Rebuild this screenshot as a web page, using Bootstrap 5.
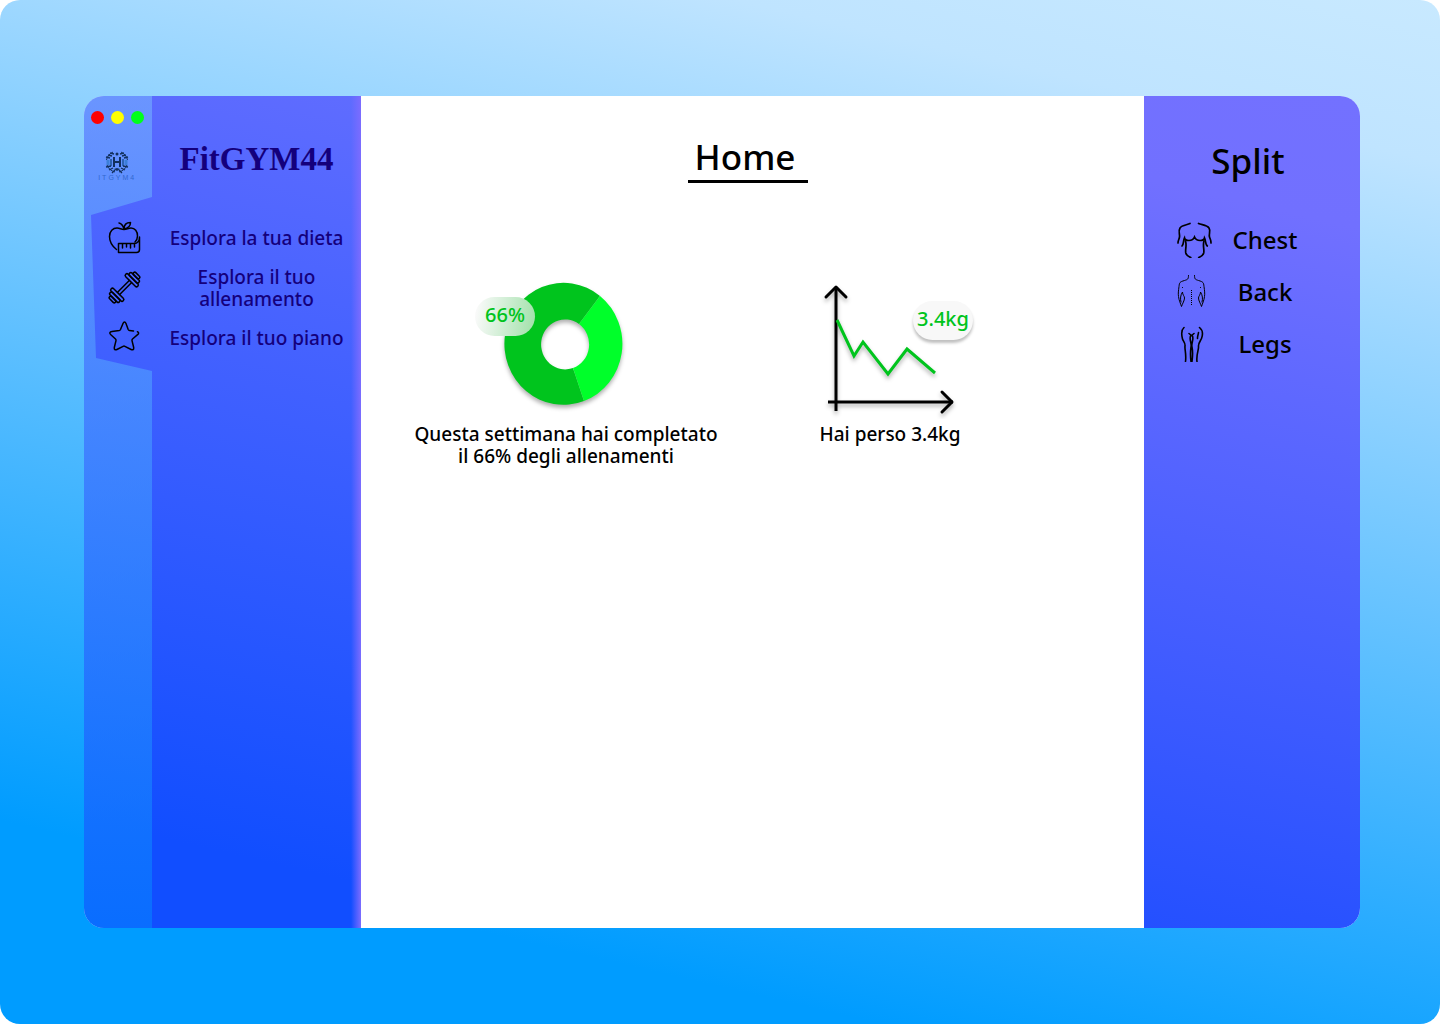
<!DOCTYPE html>
<html lang="it">
<head>
<meta charset="utf-8">
<meta name="viewport" content="width=device-width, initial-scale=1">
<title>FitGYM44</title>
<link href="https://cdn.jsdelivr.net/npm/bootstrap@5.3.0/dist/css/bootstrap.min.css" rel="stylesheet">
<style>
  body { background: #fff; font-family: "Noto Sans", "Open Sans", sans-serif; font-weight: 500; color: #000; }
  a { color: inherit; text-decoration: none; }
  .desktop { padding: 96px 80px 96px 84px; border-radius: 20px; background: linear-gradient(193deg, #c8e9ff 0%, #bfe4ff 12%, #009cff 85%); }
  .app-window { border-radius: 20px; overflow: hidden; background: #fff; }

  .sidebar { flex: 0 0 277px; background: linear-gradient(90deg, transparent 267px, #7c6cff 277px), linear-gradient(193deg, #5f6cff 0%, #114eff 88%); isolation: isolate; }
  .sidebar::before { content: ""; position: absolute; inset: 0 auto 0 0; width: 68px; z-index: -1; background: linear-gradient(#7bbfff80, #0095ff70);
    clip-path: polygon(0 0, 100% 0, 100% 101px, 7px 119px, 12px 262px, 100% 275px, 100% 100%, 0 100%); }
  .brand-row { height: 117px; }
  .rail-cell { flex: 0 0 68px; }
  .window-dots { padding: 15px 0 0 7px; gap: 7px; }
  .window-dot { width: 13px; height: 13px; border: 0; border-radius: 50%; padding: 0; }
  .dot-close { background: #f00; }
  .dot-min { background: #ff0; }
  .dot-max { background: #00ff1a; }
  .logo { width: 40px; margin: 26px 0 0 13px; }
  .logo-text { width: 38px; overflow: hidden; font: 7px/8px "Liberation Sans", sans-serif; letter-spacing: 2px; color: #3268cf; }
  .brand-name { margin: 0; padding-top: 41px; font: bold 33px/44px "Liberation Serif", serif; color: #14007c; }
  .nav-row { height: 50px; color: #14007c; font-size: 19px; line-height: 22px; }
  .nav-icon { padding-left: 12px; color: #000; }

  .main-area { padding-top: 37px; }
  .page-title { width: 120px; height: 50px; margin: 0 9px 86px 0; padding-right: 6px; border-bottom: 3px solid #000; font-size: 35px; line-height: 48px; font-weight: 500; }
  .stats { padding-left: 43px; }
  .stat { flex: 0 1 324px; }
  .stat figcaption { margin-top: 4px; font-size: 19px; line-height: 22px; }
  .chart { width: 160px; height: 150px; }
  .value-badge { width: 60px; height: 39px; border-radius: 20px; color: #00c41d; font-size: 20px; line-height: 36px; }
  .badge-share { left: -11px; top: 28px; background: linear-gradient(100deg, #fafafa 5%, #9fe0a8 100%); }
  .badge-weight { left: 103px; top: 32px; background: #f8f8f8; box-shadow: 0 3px 3px #00000040; }
  .drop { filter: drop-shadow(0 3px 2px #00000050); }

  .split-panel { flex: 0 0 216px; padding-top: 40px; background: linear-gradient(193deg, #7371ff 0%, #7170ff 15%, #2450ff 100%); }
  .split-title { margin: 0 8px 29px 0; font-size: 35px; line-height: 49px; font-weight: 500; }
  .split-row { height: 52px; padding-left: 32px; font-size: 24px; line-height: 30px; }
  .split-label { width: 106px; }
</style>
</head>
<body>
<div class="desktop min-vh-100 d-flex">
  <div class="app-window d-flex flex-grow-1">

    <aside class="sidebar position-relative">
      <div class="brand-row d-flex">
        <div class="rail-cell">
          <div class="window-dots d-flex">
            <button class="window-dot dot-close" type="button" aria-label="Chiudi"></button>
            <button class="window-dot dot-min" type="button" aria-label="Riduci"></button>
            <button class="window-dot dot-max" type="button" aria-label="Ingrandisci"></button>
          </div>
          <div class="logo d-flex flex-column align-items-center">
            <svg width="24" height="24" viewBox="0 0 24 24" fill="none" stroke="#12305e" aria-hidden="true">
              <path d="M3 10v5M21 10v5" stroke="#3c7fd8" stroke-width="3"/>
              <path d="M6 9v7M18 9v7" stroke="#2c62b4" stroke-width="2"/>
              <path d="M9 7v10M15 7v10M9 12h6" stroke-width="2"/>
              <path d="M8 2C4 4 2 7 1.500 10M16 2c4 2 6 5 6.500 8M2 15c1 3 4 6 8 7M22 15c-1 3-4 6-8 7"/>
              <path d="M9 4L5 3M7 6L3 5M5 8L1 7M15 4l4-1M17 6l4-1M19 8l4-1M6 16l-5 1M8 18l-4 2M10 20l-3 3M18 16l5 1M16 18l4 2M14 20l3 3" stroke-width="1.300"/>
              <circle cx="12" cy="4" r="1.500" fill="#12305e" stroke="none"/>
              <path d="M9 19l3-1 3 1-3 2z" fill="#12305e" stroke="none"/>
            </svg>
            <div class="logo-text d-flex justify-content-center">FITGYM44</div>
          </div>
        </div>
        <h2 class="brand-name flex-grow-1 text-center">FitGYM44</h2>
      </div>

      <nav aria-label="Menu principale">
        <a class="nav-row d-flex align-items-center" href="#dieta">
          <span class="rail-cell nav-icon d-flex justify-content-center">
            <svg width="33" height="35" viewBox="0 0 33 35" fill="none" stroke="currentColor" stroke-width="1.5" stroke-linecap="round" stroke-linejoin="round" aria-hidden="true">
              <path d="M8.500 28.500C4 25 1.500 20 1.500 15.500 1.500 10 5 7 9 7c3 0 4 1.500 7 1.500S20 7 23 7c4 0 6.500 3.500 6.500 8 0 2.500-1 4.500-2.500 6"/>
              <path d="M11 2c2.500.5 4 2.500 5 6 0-4 2-6.500 6.500-6.500C22.500 5 20.500 7 16 8"/>
              <path d="M10.500 22.500H26c3.500 0 5.500-2.500 5.500-6.500v12.500c0 2-1 3-3 3h-18z"/>
              <path d="M14.500 23v4M18.500 23v3M22.500 23v4M26.500 23v3"/>
            </svg>
          </span>
          <span class="flex-grow-1 text-center">Esplora la tua dieta</span>
        </a>
        <a class="nav-row d-flex align-items-center" href="#allenamento">
          <span class="rail-cell nav-icon d-flex justify-content-center">
            <svg width="33" height="35" viewBox="0 0 33 35" fill="none" stroke="currentColor" stroke-width="1.500" aria-hidden="true">
              <g transform="translate(16.500 16.500) rotate(-45)">
                <path d="M-9-1.500H9M-9 1.500H9"/>
                <rect x="-12" y="-8.500" width="3.500" height="17" rx="1.700"/>
                <rect x="-15.500" y="-6.500" width="3.500" height="13" rx="1.700"/>
                <rect x="-18.500" y="-4" width="3" height="8" rx="1.500"/>
                <rect x="8.500" y="-8.500" width="3.500" height="17" rx="1.700"/>
                <rect x="12" y="-6.500" width="3.500" height="13" rx="1.700"/>
                <rect x="15.500" y="-4" width="3" height="8" rx="1.500"/>
              </g>
            </svg>
          </span>
          <span class="flex-grow-1 text-center">Esplora il tuo<br>allenamento</span>
        </a>
        <a class="nav-row d-flex align-items-center" href="#piano">
          <span class="rail-cell nav-icon d-flex justify-content-center">
            <svg width="33" height="37" viewBox="0 0 33 37" fill="none" stroke="currentColor" stroke-width="1.500" stroke-linecap="round" stroke-linejoin="round" aria-hidden="true">
              <path d="M25.500 11l-4-.5c-.7-.1-1-.4-1.300-1L18 3.500c-.8-2-2.200-2-3 0l-2.500 6c-.3.600-.7.900-1.300 1L4 11.500c-2.300.3-2.800 1.600-1.400 3L7.500 19c.5.500.6 1 .5 1.600L6.300 27.500c-.3 2 .9 2.900 2.600 2l6.200-3.200c.6-.3 1.200-.3 1.800 0l6.200 3.200c1.700.9 2.900 0 2.600-2L24 20.600c-.1-.6 0-1.100.5-1.600l5.400-4.600c1.100-1.100.9-2.200-.5-2.700"/>
            </svg>
          </span>
          <span class="flex-grow-1 text-center">Esplora il tuo piano</span>
        </a>
      </nav>
    </aside>

    <main class="main-area flex-grow-1">
      <div class="d-flex justify-content-center">
        <h1 class="page-title text-center">Home</h1>
      </div>
      <div class="stats d-flex">
        <figure class="stat m-0 d-flex flex-column align-items-center">
          <div class="chart position-relative">
            <svg class="d-block" width="160" height="150" viewBox="0 0 160 150" role="img" aria-label="Allenamenti completati">
              <g class="drop">
                <path fill="#00c41d" d="M114 27A59 61 0 1 0 98 132L87 99A24 25 0 1 1 93 55Z"/>
                <path fill="#00ff2a" d="M114 27A59 61 0 0 1 98 132L87 99A24 25 0 0 0 93 55Z"/>
              </g>
            </svg>
            <span class="value-badge badge-share position-absolute text-center">66%</span>
          </div>
          <figcaption class="text-center">Questa settimana hai completato<br>il 66% degli allenamenti</figcaption>
        </figure>
        <figure class="stat m-0 d-flex flex-column align-items-center">
          <div class="chart position-relative">
            <svg class="d-block" width="160" height="150" viewBox="0 0 160 150" fill="none" stroke-width="3" role="img" aria-label="Andamento del peso">
              <g class="drop" stroke="#000">
                <path d="M26 18V142M18 133H143"/>
                <path d="M16 28L26 18L36 28M132 123L142 133L132 143" stroke-linecap="round" stroke-linejoin="round"/>
              </g>
              <path class="drop" stroke="#00c41d" d="M27 51L44 87L53 73L78 105L97 80L125 104"/>
            </svg>
            <span class="value-badge badge-weight position-absolute text-center">3.4kg</span>
          </div>
          <figcaption class="text-center">Hai perso 3.4kg</figcaption>
        </figure>
      </div>
    </main>

    <aside class="split-panel">
      <h2 class="split-title text-center">Split</h2>
      <nav aria-label="Split">
        <a class="split-row d-flex align-items-center" href="#chest">
          <svg width="36" height="36" viewBox="0 0 36 36" fill="none" stroke="currentColor" stroke-width="1.700" stroke-linecap="round" aria-hidden="true">
            <path d="M14 1.500C11 3 6 3 4 6c-2 3 0 6-.5 9S2 18 2 21M22.500 1.500C26 3 31 3 33 6c2 3-.5 6 .5 9s1.500 3 1.500 6"/>
            <path d="M6 24c2-2 1-5 2.500-8 .5 3 8 4 10-1 2 5 9.500 4 10 1 1.500 3 .5 6 2.800 8"/>
            <path d="M9.500 19c1.500 5-.5 8 .3 12 .5 2 2.200 3.500 5 4.500M28 19c-1.500 5 .5 8-.3 12-.5 2-2 3.500-5 4.500"/>
          </svg>
          <span class="split-label text-center">Chest</span>
        </a>
        <a class="split-row d-flex align-items-center" href="#back">
          <svg width="36" height="36" viewBox="0 0 36 36" fill="none" stroke="currentColor" stroke-linecap="round" aria-hidden="true">
            <path d="M12.500 1.500c0 4-1 4-4 5-5 1.500-5 2-5.500 6-.5 4-1 7-.5 10 .5 4 2 7 3 10 1-3 3-6 3-8.500 0-2-2-3-2-6-2 3-2.500 7-1.500 10"/>
            <path d="M18.500 1.500c0 4 1 4 4 5 5 1.500 5 2 5.500 6 .5 4 1 7 .5 10-.5 4-2 7-3 10-1-3-3-6-3-8.500 0-2 2-3 2-6 2 3 2.500 7 1.500 10"/>
            <path d="M6.500 13.500v.1M24.500 13.500v.1"/>
            <path d="M15.500 16v15" stroke-dasharray="1 1" stroke-linecap="butt"/>
          </svg>
          <span class="split-label text-center">Back</span>
        </a>
        <a class="split-row d-flex align-items-center" href="#legs">
          <svg width="36" height="36" viewBox="0 0 36 36" fill="none" stroke="currentColor" stroke-width="1.600" stroke-linecap="round" aria-hidden="true">
            <path d="M8 1.500C5 4 5.500 9 6.500 13c.5 2 3 4 2.500 7-.5 3 1.500 8 .5 15.500M23.500 1.500c3 2.500 3.500 7 2 11-.8 2-3.500 5-3 8 .5 3-2.500 8-1.500 15"/>
            <path d="M13 7.500l2.500 2 2.500-2M14.500 10c-1.500 4 1.500 7 .5 11-.5 4-1 7 0 14.500M16.500 10c1.500 4-1.500 7-.5 11 .8 4 1 7 0 14.500M22.500 6.500c-.2 2-1.200 4-1 6"/>
          </svg>
          <span class="split-label text-center">Legs</span>
        </a>
      </nav>
    </aside>
  </div>
</div>
<script src="https://cdn.jsdelivr.net/npm/bootstrap@5.3.0/dist/js/bootstrap.bundle.min.js"></script>
</body>
</html>
